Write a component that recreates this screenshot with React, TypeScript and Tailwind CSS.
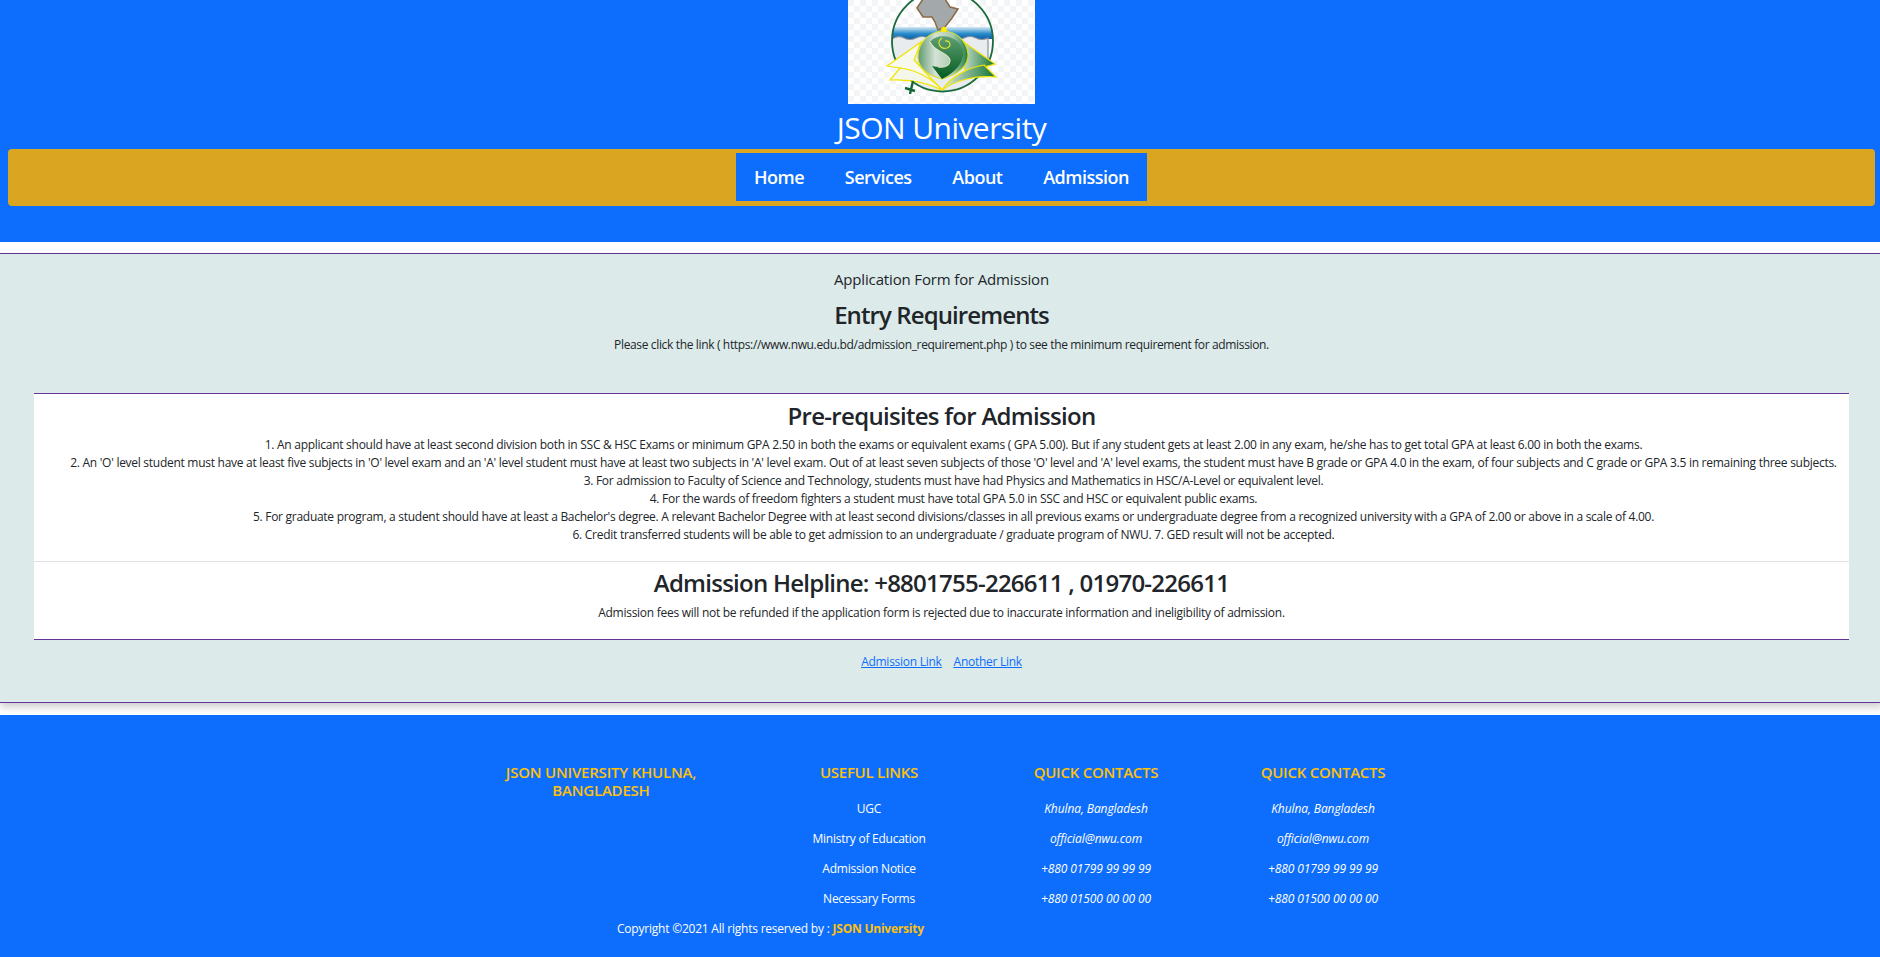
const font = "font-['Open_Sans','Noto_Sans',sans-serif]";

const requirements = [
  "1. An applicant should have at least second division both in SSC & HSC Exams or minimum GPA 2.50 in both the exams or equivalent exams ( GPA 5.00). But if any student gets at least 2.00 in any exam, he/she has to get total GPA at least 6.00 in both the exams.",
  "2. An 'O' level student must have at least five subjects in 'O' level exam and an 'A' level student must have at least two subjects in 'A' level exam. Out of at least seven subjects of those 'O' level and 'A' level exams, the student must have B grade or GPA 4.0 in the exam, of four subjects and C grade or GPA 3.5 in remaining three subjects.",
  "3. For admission to Faculty of Science and Technology, students must have had Physics and Mathematics in HSC/A-Level or equivalent level.",
  "4. For the wards of freedom fighters a student must have total GPA 5.0 in SSC and HSC or equivalent public exams.",
  "5. For graduate program, a student should have at least a Bachelor's degree. A relevant Bachelor Degree with at least second divisions/classes in all previous exams or undergraduate degree from a recognized university with a GPA of 2.00 or above in a scale of 4.00.",
  "6. Credit transferred students will be able to get admission to an undergraduate / graduate program of NWU. 7. GED result will not be accepted.",
];

const usefulLinks = ["UGC", "Ministry of Education", "Admission Notice", "Necessary Forms"];
const contacts = ["Khulna, Bangladesh", "official@nwu.com", "+880 01799 99 99 99", "+880 01500 00 00 00"];

const Logo = () => (
  <svg viewBox="0 0 187 104" className="w-[187px] h-[104px] block">
    <defs>
      <pattern id="checker" width="12" height="12" patternUnits="userSpaceOnUse">
        <rect width="12" height="12" fill="#ffffff" />
        <rect width="6" height="6" fill="#f4f5f6" />
        <rect x="6" y="6" width="6" height="6" fill="#f4f5f6" />
      </pattern>
      <linearGradient id="sea" x1="0" y1="0" x2="0" y2="1">
        <stop offset="0" stopColor="#d5e9f5" />
        <stop offset="0.55" stopColor="#2a8ccb" />
        <stop offset="1" stopColor="#0b5fa6" />
      </linearGradient>
      <linearGradient id="globe" x1="0" y1="0" x2="1" y2="0">
        <stop offset="0" stopColor="#5f9a70" />
        <stop offset="0.35" stopColor="#d5e2d6" />
        <stop offset="0.7" stopColor="#a6c9ad" />
        <stop offset="1" stopColor="#1f7f3f" />
      </linearGradient>
      <linearGradient id="swoosh" x1="0" y1="0" x2="0" y2="1">
        <stop offset="0" stopColor="#5f9f74" />
        <stop offset="1" stopColor="#045a20" />
      </linearGradient>
      <linearGradient id="page" x1="0" y1="0" x2="1" y2="0">
        <stop offset="0" stopColor="#e6eee4" />
        <stop offset="1" stopColor="#0f7331" />
      </linearGradient>
      <clipPath id="disc">
        <circle cx="94.5" cy="41" r="50.5" />
      </clipPath>
    </defs>
    <rect width="187" height="104" fill="url(#checker)" />
    <g clipPath="url(#disc)">
      <rect x="40" y="27" width="110" height="12" fill="url(#sea)" />
      <path d="M44 39q6-4 12-1t12 0 12 0 12 0 12 0 12 0 12 0 12 0V92H44Z" fill="#e9ecef" stroke="#8a9399" strokeWidth="1.2" />
    </g>
    <circle cx="94.5" cy="41" r="50.5" fill="none" stroke="#1a6b3c" strokeWidth="1.8" />
    <path d="M69 8 75-1H97L102 7 110 9 104 18 97 27 90 30 87 22 84 17H75Z" fill="#a3a8ab" stroke="#8b6a45" strokeWidth="1.5" />
    <path d="M39 66 73 42 66 60 94 90 70 76 52 68Z" fill="#f8f9ee" stroke="#f2e500" strokeWidth="1.2" />
    <path d="M42 80 52 68C68 70 84 78 94 90 78 82 60 79 42 80Z" fill="#f4f6ea" stroke="#f2e500" strokeWidth="1.2" />
    <path d="M110 38 147 64 118 72 112 58Z" fill="url(#page)" stroke="#f2e500" strokeWidth="1.2" />
    <path d="M94 90C102 78 118 68 136 65L148 77C128 75 108 80 94 90Z" fill="url(#page)" stroke="#f2e500" strokeWidth="1.2" />
    <path d="M95 31C80 32 70 43 70 57 70 69 82 76 94 79 108 75 121 67 120 54 119 41 108 31 95 31Z" fill="url(#globe)" stroke="#d8de20" strokeWidth="1.1" />
    <path d="M94 79 84 66C92 68 102 68 102 60 100 54 88 52 82 42 88 34 104 34 112 44 120 56 112 70 94 79Z" fill="url(#swoosh)" />
    <path d="M82 42C86 52 100 52 102 60 102 66 96 68 90 67" fill="none" stroke="#dfe8c0" strokeWidth="1.1" />
    <path d="M94 38C88 42 92 50 99 48 104 46 102 40 97 41" fill="none" stroke="#e4e62a" strokeWidth="1.1" />
    <circle cx="96" cy="29.5" r="2.8" fill="#ffec00" />
    <path d="M65 81 62 94M57 88l10 3" fill="none" stroke="#11663a" strokeWidth="2.4" />
  </svg>
);

const FooterColumn = ({ title, items, italic, className }: { title: string; items: string[]; italic?: boolean; className: string }) => (
  <div className={`${className} flex flex-col items-center`}>
    <h5 className="text-[15px] leading-[18px] font-semibold text-[#ffc107] tracking-[-0.25px] mb-[19px]">{title}</h5>
    {items.map((item, index) => (
      <p key={index + "li"} className={`text-[12px] leading-[18px] text-white mb-[12px] ${italic ? "italic tracking-[-0.1px]" : "tracking-[-0.25px]"}`}>
        {item}
      </p>
    ))}
  </div>
);

export default function App() {
  return (
    <div className={`w-full h-[957px] overflow-hidden bg-white text-[#212529] ${font}`}>
      <div className="w-[1883px]">
        <header className="h-[242px] bg-[#0d6efd] px-[8px] flex flex-col items-center">
          <Logo />
          <h1 className="mt-[4px] mb-[2px] text-[30px] leading-[39px] text-white tracking-[-0.55px]">JSON University</h1>
          <nav className="w-full h-[57px] bg-[#daa520] rounded-[4px] flex justify-center items-start pt-[4px]">
            <ul className="h-[48px] w-[411px] bg-[#0d6efd] flex items-center justify-between px-[18px] text-[18px] font-semibold text-white tracking-[-0.5px]">
              <li>Home</li>
              <li>Services</li>
              <li>About</li>
              <li>Admission</li>
            </ul>
          </nav>
        </header>

        <main className="mt-[11px] h-[450px] bg-[#dcebea] border-y border-[#663399] shadow-[0_4px_8px_rgba(0,0,0,0.2)] flex flex-col items-center text-center">
          <p className="mt-[15px] text-[15px] leading-[21px] font-medium tracking-[-0.15px]">Application Form for Admission</p>
          <h2 className="mt-[10px] text-[24px] leading-[29px] font-semibold tracking-[-0.9px]">Entry Requirements</h2>
          <p className="mt-[7px] text-[12px] leading-[18px] tracking-[-0.35px]">
            Please click the link ( https://www.nwu.edu.bd/admission_requirement.php ) to see the minimum requirement for admission.
          </p>

          <section className="mt-[39px] w-[1815px] bg-white border-y border-[#663399]">
            <div className="h-[168px] border-b border-[#dee2e6] pt-[7px]">
              <h3 className="text-[24px] leading-[29px] font-semibold tracking-[-0.7px] mb-[6px]">Pre-requisites for Admission</h3>
              <div className="pl-[24px]">
                {requirements.map((line, index) => (
                  <p key={index + "rq"} className="text-[12px] leading-[18px] tracking-[-0.275px] whitespace-nowrap">
                    {line}
                  </p>
                ))}
              </div>
            </div>
            <div className="h-[77px] pt-[5px]">
              <h3 className="text-[24px] leading-[32px] font-semibold tracking-[-0.75px]">Admission Helpline: +8801755-226611 , 01970-226611</h3>
              <p className="mt-[5px] text-[12px] leading-[18px] tracking-[-0.27px]">
                Admission fees will not be refunded if the application form is rejected due to inaccurate information and ineligibility of admission.
              </p>
            </div>
          </section>

          <div className="mt-[13px] flex gap-[12px] text-[12px] leading-[18px] tracking-[-0.27px] text-[#0d6efd] underline">
            <a href="#">Admission Link</a>
            <a href="#">Another Link</a>
          </div>
        </main>

        <footer className="mt-[12px] h-[242px] bg-[#0d6efd] pt-[48px]">
          <div className="flex items-start text-center">
            <h5 className="ml-[496px] w-[210px] text-[15px] leading-[18px] font-semibold text-[#ffc107] tracking-[-0.2px]">
              JSON UNIVERSITY KHULNA, BANGLADESH
            </h5>
            <FooterColumn title="USEFUL LINKS" items={usefulLinks} className="ml-[65px] w-[196px]" />
            <FooterColumn title="QUICK CONTACTS" items={contacts} italic className="ml-[31px] w-[196px]" />
            <FooterColumn title="QUICK CONTACTS" items={contacts} italic className="ml-[31px] w-[196px]" />
          </div>
          <p className="ml-[617px] mt-0 text-[12px] leading-[18px] tracking-[-0.22px] text-white">
            Copyright ©2021 All rights reserved by : <span className="font-bold text-[#ffc107]">JSON University</span>
          </p>
        </footer>
      </div>
    </div>
  );
}
